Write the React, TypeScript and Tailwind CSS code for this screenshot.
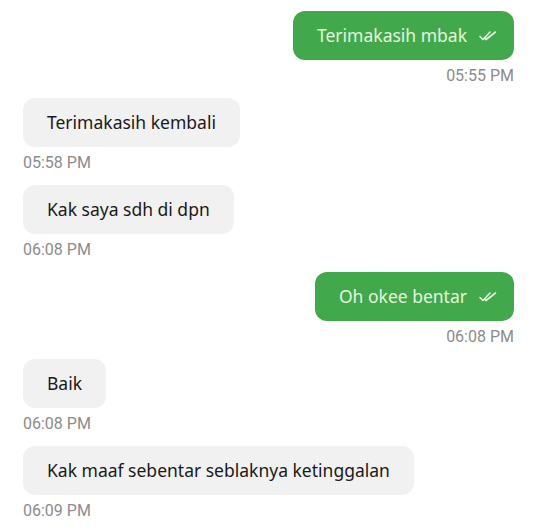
import React from "react";

interface Message {
  text: string;
  time: string;
  mine: boolean;
}

const messages: Message[] = [
  { text: "Terimakasih mbak", time: "05:55 PM", mine: true },
  { text: "Terimakasih kembali", time: "05:58 PM", mine: false },
  { text: "Kak saya sdh di dpn", time: "06:08 PM", mine: false },
  { text: "Oh okee bentar", time: "06:08 PM", mine: true },
  { text: "Baik", time: "06:08 PM", mine: false },
  { text: "Kak maaf sebentar seblaknya ketinggalan", time: "06:09 PM", mine: false },
];

function DoubleCheck() {
  return (
    <svg width="18" height="12" viewBox="0 0 18 12" fill="none" aria-hidden="true">
      <path d="M1 6.5l3 3L11 2" stroke="currentColor" strokeWidth="1.6" strokeLinecap="round" strokeLinejoin="round" />
      <path d="M7 9.5L16.5 2" stroke="currentColor" strokeWidth="1.6" strokeLinecap="round" />
      <path d="M5.5 8l1.5 1.5" stroke="currentColor" strokeWidth="1.6" strokeLinecap="round" />
    </svg>
  );
}

function Bubble({ msg }: { msg: Message }) {
  return (
    <div className={`flex flex-col ${msg.mine ? "items-end" : "items-start"} mb-[14px]`}>
      {msg.mine ? (
        <div className="h-[49px] flex items-center gap-[12px] pl-[24px] pr-[17px] rounded-[12px] bg-[#41a94b] text-[#e4f5dc] text-[17.5px]">
          <span>{msg.text}</span>
          <DoubleCheck />
        </div>
      ) : (
        <div className="h-[49px] flex items-center px-[24px] rounded-[12px] bg-[#f1f1f1] text-[#1a1a1a] text-[17.5px]">
          {msg.text}
        </div>
      )}
      <span className="mt-[7px] text-[16px] leading-[17px] text-[#8c8c8c] font-['Roboto',sans-serif]">
        {msg.time}
      </span>
    </div>
  );
}

export default function App() {
  return (
    <div
      className="w-[539px] h-[527px] bg-white pt-[11px] pl-[23px] pr-[25px] overflow-hidden flex flex-col"
      style={{ fontFamily: '"Noto Sans", "Open Sans", sans-serif' }}
    >
      {messages.map((m, i) => (
        <Bubble key={i} msg={m} />
      ))}
    </div>
  );
}
